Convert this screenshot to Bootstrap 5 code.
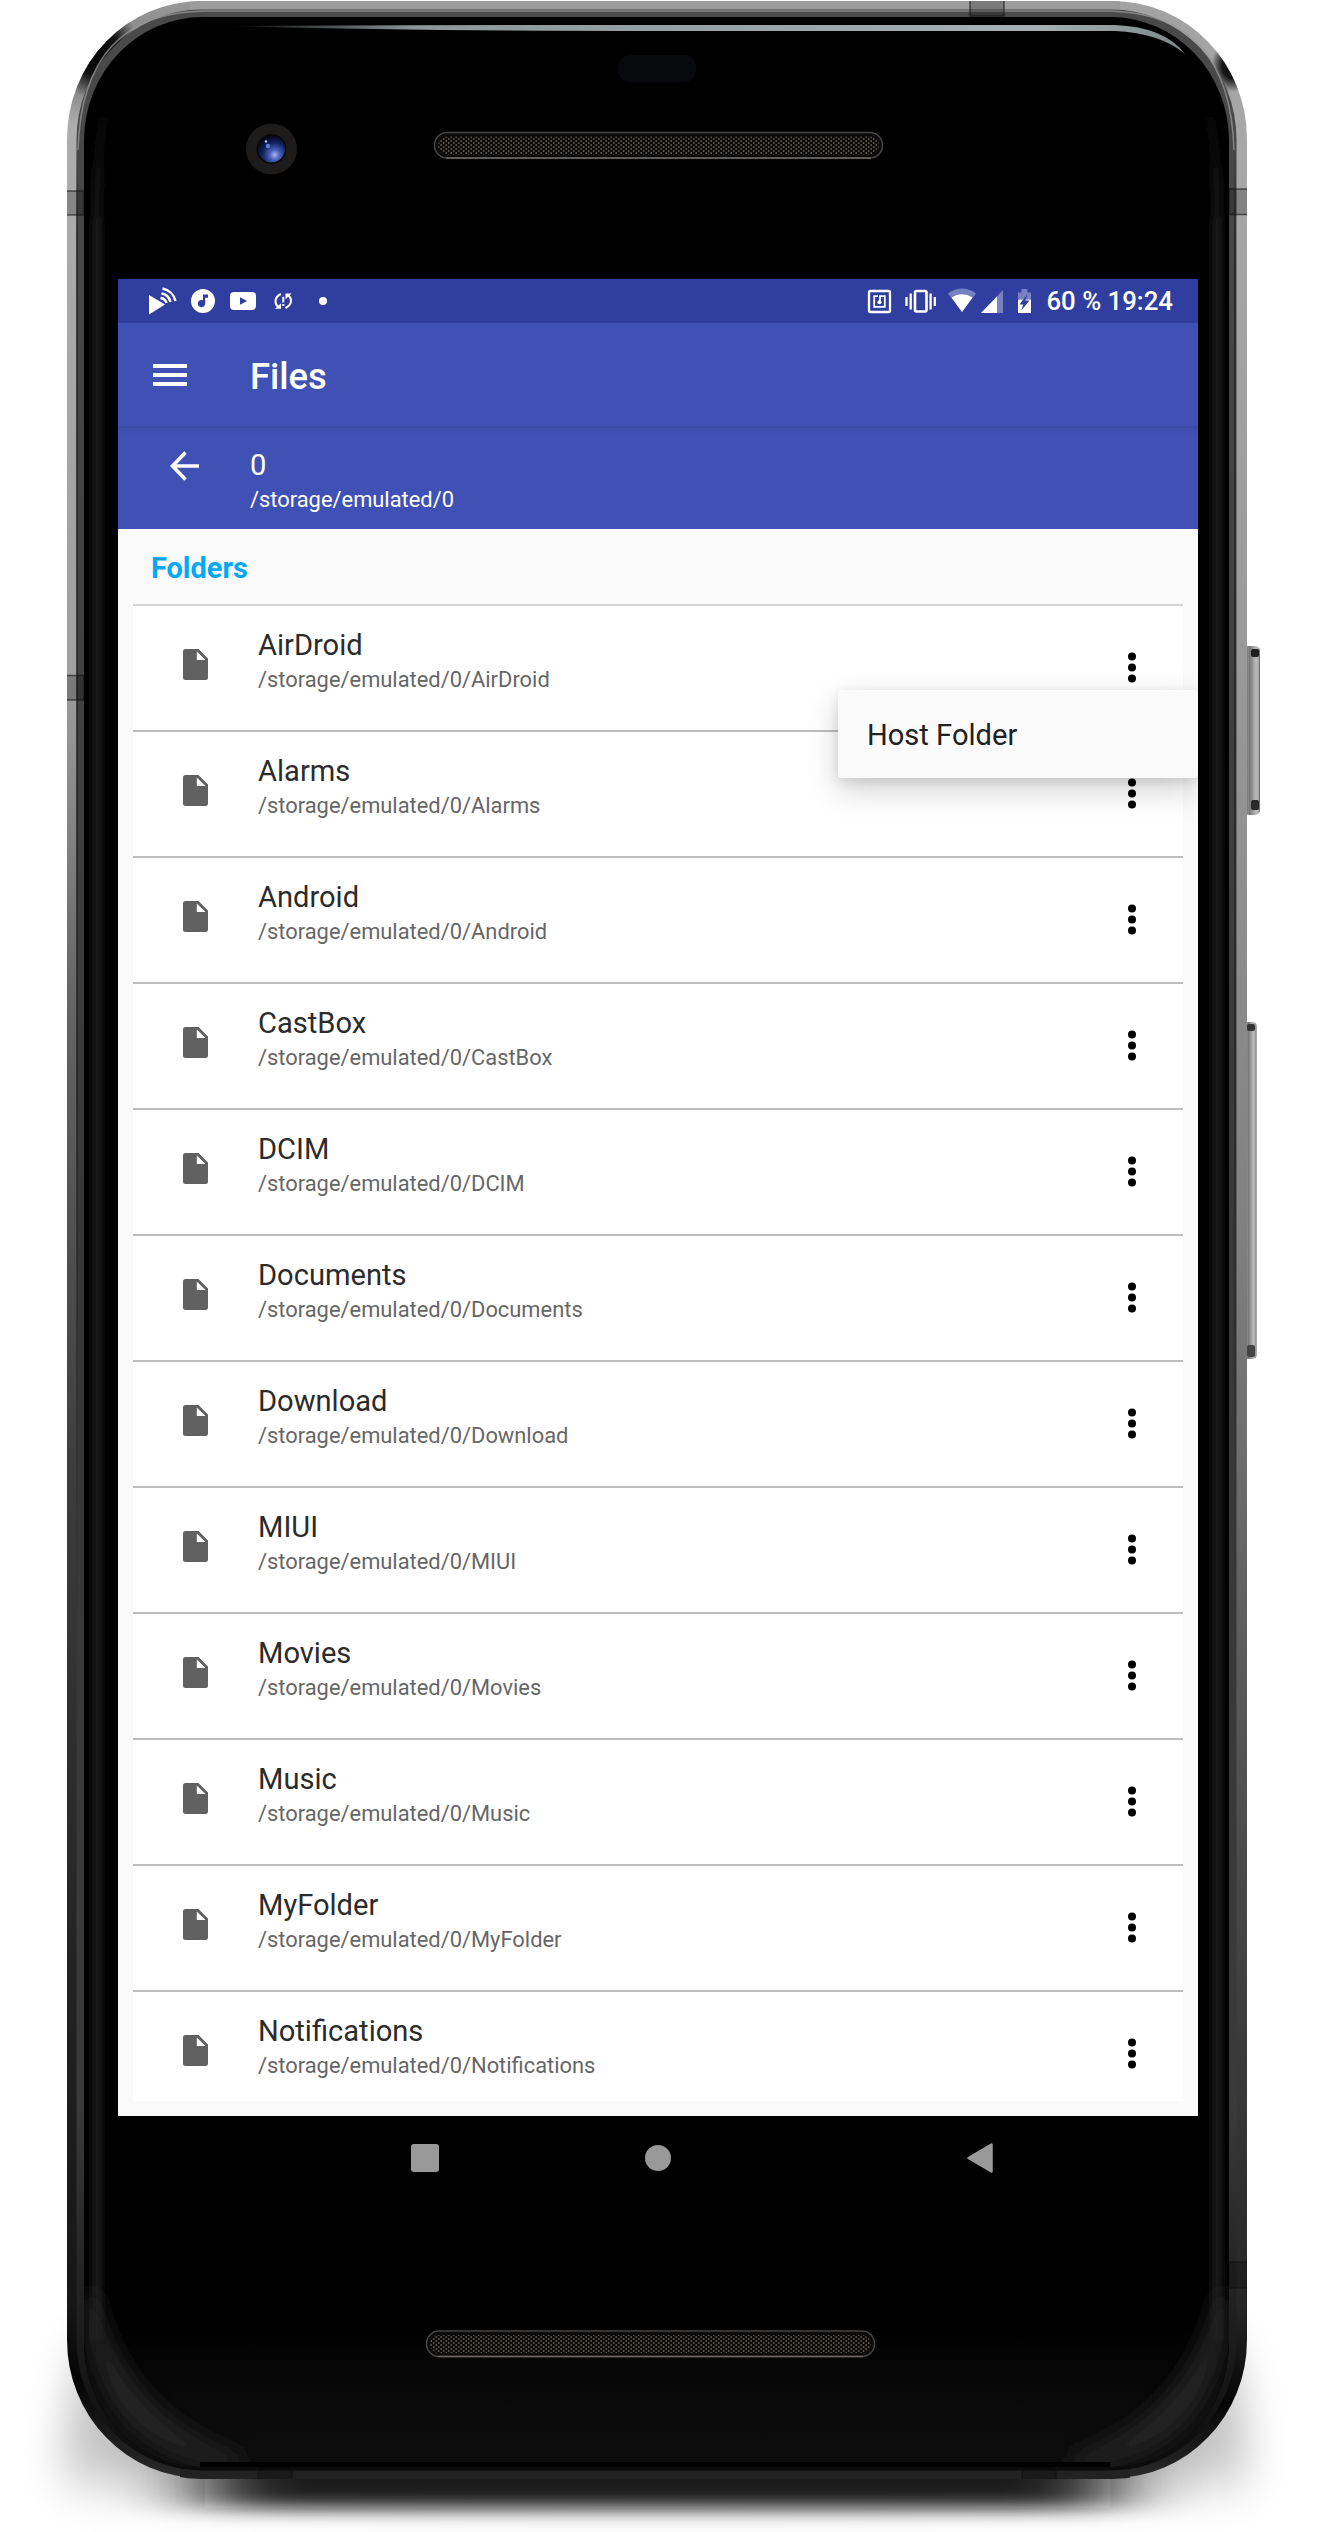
<!DOCTYPE html>
<html lang="en">
<head>
<meta charset="utf-8">
<meta name="viewport" content="width=device-width, initial-scale=1">
<title>Files</title>
<link href="https://cdn.jsdelivr.net/npm/bootstrap@5.3.0/dist/css/bootstrap.min.css" rel="stylesheet">
<style>
  body { background: #fff; font-family: Roboto, "Liberation Sans", sans-serif; }
  .device { width: 1330px; height: 2532px; padding: 279px 132px 0 118px; }
  .device-art { z-index: 0; }
  .phone-screen { width: 1080px; height: 1837px; background: #fafafa; z-index: 1; }
  .status-strip { height: 44px; background: #303f9f; padding: 0 25px 0 29px; font-size: 25.8px; font-weight: 500; line-height: 44px; }
  .status-strip svg { display: block; flex: none; }
  .app-toolbar { height: 103px; background: #3f51b5; padding-left: 35px; }
  .app-title { font-size: 36.4px; font-weight: 500; margin-left: 63px; line-height: 44px; padding-top: 4px; }
  .path-head { height: 103px; background: linear-gradient(#3949a3, #3d4eae 3px, #3f51b5 9px); padding-left: 52px; }
  .path-head svg { margin-top: 25px; }
  .path-text { margin-left: 51px; padding-top: 22px; }
  .name-line { font-size: 29.1px; line-height: 34px; }
  .path-line { font-size: 21.88px; line-height: 26px; margin-top: 5px; }
  .section-title { height: 75px; padding-left: 33px; font-size: 28.9px; font-weight: 700; color: #03a9f4; line-height: 79px; }
  .folder-list { margin: 0 15px; }
  .folder-list .folder-row { height: 126px; border: 0; border-top: 2px solid #bdbdbd; border-radius: 0; background: #fff; padding: 0 47px 0 50px; color: #2b2b2b; }
  .folder-list .folder-row:first-child { border-top-color: #d3d3d3; }
  .folder-list .folder-row:last-child { height: 111px; }
  .folder-row .doc { margin-top: 43px; }
  .folder-row .kebab { margin-top: 46px; }
  .folder-text { margin-left: 50px; padding-top: 22px; }
  .folder-text .path-line { color: #666; }
  .host-menu { left: 720px; top: 411px; width: 360px; height: 88px; border-radius: 4px; background: #fafafa; color: #212121; padding-left: 29px; font-size: 29.1px; line-height: 90px; box-shadow: 0 12px 32px rgba(0,0,0,.18), 0 3px 12px rgba(0,0,0,.1); z-index: 2; }
  .nav-keys { height: 84px; width: 1080px; padding-left: 293px; z-index: 1; }
  .nav-keys .home-key { margin-left: 206px; }
  .nav-keys .back-key { margin-left: 296px; }
</style>
<script src="https://cdn.jsdelivr.net/npm/bootstrap@5.3.0/dist/js/bootstrap.bundle.min.js"></script>
</head>
<body class="m-0">
<div class="device position-relative overflow-hidden">

  <!-- Handset body -->
  <svg class="device-art position-absolute top-0 start-0" width="1330" height="2532" viewBox="0 0 1330 2532" aria-hidden="true">
    <defs>
      <linearGradient id="metal" x1="0" y1="0" x2="0" y2="2478" gradientUnits="userSpaceOnUse">
        <stop offset="0" stop-color="#999"/><stop offset=".03" stop-color="#777"/><stop offset=".05" stop-color="#adadad"/>
        <stop offset=".27" stop-color="#a0a0a0"/><stop offset=".4" stop-color="#666"/><stop offset=".6" stop-color="#3c3c3c"/>
        <stop offset=".8" stop-color="#222"/><stop offset=".93" stop-color="#161616"/><stop offset=".96" stop-color="#050505"/><stop offset="1" stop-color="#2a2a2a"/>
      </linearGradient>
      <linearGradient id="metalR" x1="0" y1="0" x2="0" y2="2478" gradientUnits="userSpaceOnUse">
        <stop offset="0" stop-color="#a2a2a2"/><stop offset=".06" stop-color="#a8a8a8"/><stop offset=".27" stop-color="#999"/><stop offset=".5" stop-color="#808080"/>
        <stop offset=".7" stop-color="#555"/><stop offset=".82" stop-color="#3c3c3c"/><stop offset=".93" stop-color="#262626"/><stop offset=".97" stop-color="#050505"/><stop offset="1" stop-color="#2a2a2a"/>
      </linearGradient>
      <linearGradient id="inner" x1="0" y1="0" x2="0" y2="2478" gradientUnits="userSpaceOnUse">
        <stop offset="0" stop-color="#4a4a4a"/><stop offset=".5" stop-color="#383838"/><stop offset=".85" stop-color="#3a3a3a"/><stop offset="1" stop-color="#0a0a0a"/>
      </linearGradient>
      <linearGradient id="seam" x1="0" y1="140" x2="0" y2="1700" gradientUnits="userSpaceOnUse"><stop offset="0" stop-color="#222" stop-opacity="0"/><stop offset=".06" stop-color="#222"/><stop offset=".6" stop-color="#222"/><stop offset="1" stop-color="#222" stop-opacity="0"/></linearGradient>
      <linearGradient id="sheen" x1="0" y1="90" x2="0" y2="260" gradientUnits="userSpaceOnUse"><stop offset="0" stop-color="#1e1e1e" stop-opacity="0"/><stop offset="1" stop-color="#1e1e1e"/></linearGradient>
      <linearGradient id="glow" x1="0" y1="0" x2="0" y2="1"><stop offset="0" stop-color="#000"/><stop offset=".6" stop-color="#0a0a0a"/><stop offset="1" stop-color="#0d0d0d"/></linearGradient>
      <linearGradient id="shine"><stop offset="0" stop-color="#8b9798" stop-opacity="0"/><stop offset=".2" stop-color="#8b9798"/><stop offset=".85" stop-color="#a5b0b2"/><stop offset="1" stop-color="#7d8889"/></linearGradient>
      <linearGradient id="btn"><stop offset="0" stop-color="#666"/><stop offset=".3" stop-color="#888"/><stop offset=".35" stop-color="#777"/><stop offset=".75" stop-color="#bbb"/><stop offset=".9" stop-color="#aaa"/><stop offset="1" stop-color="#555"/></linearGradient>
      <radialGradient id="lens" cx=".62" cy=".72" r=".75"><stop offset="0" stop-color="#a9b4ee"/><stop offset=".25" stop-color="#4b60bd"/><stop offset=".6" stop-color="#12235f"/><stop offset="1" stop-color="#03040f"/></radialGradient>
      <radialGradient id="dark"><stop offset="0" stop-color="#000"/><stop offset=".5" stop-color="#000" stop-opacity=".85"/><stop offset="1" stop-color="#000" stop-opacity="0"/></radialGradient>
      <pattern id="mesh" width="5" height="4" patternUnits="userSpaceOnUse"><rect width="5" height="4" fill="#0b0a09"/><circle cx="1.2" cy="1" r=".9" fill="#625c53"/><circle cx="3.7" cy="3" r=".9" fill="#625c53"/></pattern>
      <filter id="b45" x="-20%" y="-100%" width="140%" height="300%"><feGaussianBlur stdDeviation="45 9"/></filter>
      <filter id="b22" x="-20%" y="-100%" width="140%" height="300%"><feGaussianBlur stdDeviation="22 26"/></filter>
      <filter id="b10" filterUnits="userSpaceOnUse" x="40" y="2150" width="1240" height="380"><feGaussianBlur stdDeviation="10"/></filter>
      <filter id="b4" filterUnits="userSpaceOnUse" x="60" y="60" width="1200" height="2420"><feGaussianBlur stdDeviation="3.500"/></filter>
      <clipPath id="bodyL"><rect x="0" y="0" width="657" height="2532"/></clipPath>
      <clipPath id="bodyR"><rect x="657" y="0" width="673" height="2532"/></clipPath>
      <clipPath id="shell"><rect x="67" y="1" width="1180" height="2478" rx="134" ry="138"/></clipPath>
      <clipPath id="glass"><rect x="84" y="17" width="1145" height="2450" rx="118" ry="124"/></clipPath>
    </defs>
    <!-- floor shadow -->
    <path d="M80 2350H1235L1250 2478Q1100 2496 657 2496Q200 2496 60 2478Z" fill="#000" opacity=".24" filter="url(#b22)"/>
    <rect x="205" y="2440" width="905" height="68" fill="#111" opacity=".92" filter="url(#b45)"/>
    <!-- side keys -->
    <rect x="1244" y="646" width="16" height="169" rx="5" fill="url(#btn)"/>
    <rect x="1251" y="649" width="8" height="8" rx="2" fill="#1c1c1c"/><rect x="1251" y="800" width="8" height="10" rx="2" fill="#2a2a2a"/>
    <rect x="1244" y="1022" width="12.500" height="337" rx="4" fill="url(#btn)"/>
    <rect x="1247" y="1024" width="8" height="7" rx="2" fill="#333"/><rect x="1247" y="1345" width="8" height="12" rx="2" fill="#444"/>
    <!-- metal band -->
    <rect x="67" y="1" width="1180" height="2477" rx="134" ry="138" fill="url(#metal)" clip-path="url(#bodyL)"/>
    <rect x="67" y="1" width="1180" height="2477" rx="134" ry="138" fill="url(#metalR)" clip-path="url(#bodyR)"/>
    <g clip-path="url(#shell)">
      <rect x="190" y="1" width="930" height="14" fill="#9b9b9b"/>
      <ellipse cx="98" cy="52" rx="42" ry="48" fill="url(#dark)"/>
      <ellipse cx="1233" cy="66" rx="22" ry="26" fill="url(#dark)"/>
      <rect x="180" y="2467" width="950" height="12" fill="#222"/>
    </g>
    <rect x="76.500" y="9.500" width="1160" height="2461" rx="125" ry="130" fill="url(#inner)"/>
    <path d="M78 150Q82 12 205 11H1110Q1230 14 1234 150" fill="none" stroke="#999" stroke-width="1.500" opacity=".75"/>
    <path d="M1234 140H1236V1700H1234ZM76 140H78V1700H76Z" fill="url(#seam)" opacity=".7"/>
    <!-- antenna bands -->
    <g fill="#000" fill-opacity=".22" stroke="#111" stroke-opacity=".6" stroke-width="1.500" clip-path="url(#shell)">
      <path d="M60 191H84V215H60ZM60 675.500H84V700H60ZM1229 189H1255V214.500H1229ZM1229 2262H1255V2288H1229ZM970 -5H1004V16H970ZM258 2464H292V2485H258ZM1022 2464H1056V2485H1022Z"/>
    </g>
    <!-- front glass -->
    <g clip-path="url(#glass)">
      <rect x="84" y="17" width="1145" height="2450" fill="#000"/>
      <rect x="84" y="2320" width="1145" height="147" fill="url(#glow)"/>
      <path d="M110 90Q98 130 97 200V2340M1204 90Q1216 130 1217 200V2340" fill="none" stroke="url(#sheen)" stroke-width="10" filter="url(#b4)"/>
      <path d="M90 2300Q98 2452 235 2462Q120 2420 90 2300ZM1223 2300Q1215 2452 1078 2462Q1193 2420 1223 2300Z" fill="#262626" stroke="#222" stroke-width="16" stroke-linejoin="round" filter="url(#b10)"/>
      <rect x="200" y="2462" width="910" height="6" fill="#000"/>
    </g>
    <path d="M224 26Q400 25 660 25H1115Q1165 27 1185 54Q1160 33 1115 31H660Q400 31 224 26Z" fill="url(#shine)"/>
    <rect x="618" y="55" width="78" height="27" rx="12" fill="#07090d"/>
    <circle cx="271.500" cy="149" r="25.500" fill="#1e1b1b"/>
    <circle cx="271.500" cy="149" r="15" fill="#080808"/>
    <circle cx="271.500" cy="149" r="13.500" fill="url(#lens)"/>
    <circle cx="268" cy="146" r="2.200" fill="#5f7be0"/><circle cx="266" cy="141.500" r="1.200" fill="#b8c6ff"/>
    <g fill="#0b0b0b" stroke-width="1.500">
      <rect x="434.500" y="132.500" width="448" height="25.500" rx="12.500" stroke="#484644"/>
      <rect x="426.500" y="2331" width="448" height="25.500" rx="12.500" stroke="#484644"/>
    </g>
    <path d="M446 158H871M438 2356.500H863" stroke="#6b6662" stroke-width="1.500"/>
    <rect x="438" y="136.500" width="441" height="18" rx="9" fill="url(#mesh)"/>
    <rect x="430" y="2335" width="441" height="18" rx="9" fill="url(#mesh)"/>
  </svg>

  <!-- App screen -->
  <main class="phone-screen position-relative overflow-hidden">
    <div class="status-strip d-flex align-items-center justify-content-between text-white">
      <!-- notification icons -->
      <svg width="184" height="44" viewBox="147 279 184 44" fill="#fff" aria-hidden="true">
        <path d="M149 295L165 304.500L149 314.500Z"/>
        <path d="M162.500 288.500A16.500 16.500 0 0 1 175.500 301M161.500 293.500A11 11 0 0 1 170.500 302M160.500 298A7 7 0 0 1 166.500 303" fill="none" stroke="#fff" stroke-width="2.500"/>
        <circle cx="203" cy="301" r="12"/>
        <path d="M203 294.500H208V297.800H205.200V303.500A3.700 3.700 0 1 1 203 300.200Z" fill="#303f9f"/>
        <path d="M234 292H252Q256 292 256 296V306Q256 310 252 310H234Q230 310 230 306V296Q230 292 234 292Z"/><path d="M240 297.200L247.200 301L240 304.800Z" fill="#303f9f"/>
        <path d="M280.800 294Q275.500 296.500 275.500 301.500Q275.500 305 278.800 307.500M285.500 308Q291 305.500 291 300.500Q291 297 287.600 294.800" fill="none" stroke="#fff" stroke-width="2"/>
        <path d="M275 308.800H281V303.200ZM291.700 293.400H285.500V299.200Z"/><path d="M282.300 296.800H284.300V302.400H282.300ZM282.300 304H284.300V306H282.300Z"/>
        <circle cx="323" cy="301" r="4"/>
      </svg>
      <div class="d-flex align-items-center">
        <!-- system icons -->
        <svg width="180" height="44" viewBox="866 279 180 44" fill="#fff" aria-hidden="true">
          <rect x="869" y="291" width="21" height="21" rx="1.500" fill="none" stroke="#fff" stroke-width="2.300"/>
          <path d="M878 296.200H874.200V306.800H884.800V296.200H880V302" fill="none" stroke="#fff" stroke-width="1.800"/><circle cx="879.500" cy="302.200" r="2"/>
          <rect x="915" y="291" width="11.500" height="20.500" rx="1.500" fill="none" stroke="#fff" stroke-width="2.600"/>
          <path d="M910.700 293.500V309.500M906.500 297V306M930.600 293.500V309.500M934.800 297V306" stroke="#fff" stroke-width="2.300"/>
          <path d="M948 293.500Q962 283.500 976 293.500L962 312Z" fill-opacity=".35"/><path d="M951.500 297.500Q962 290.800 972.500 297.500L962 312Z"/>
          <path d="M981 313L1003 290V313Z" fill-opacity=".35"/><path d="M981 313L997 296.500V313Z"/>
          <path d="M1018 299.500V292.500H1021.500V289H1027.500V292.500H1031V299.500Z" fill-opacity=".35"/><path d="M1018 299.500H1031V313H1018Z"/><path d="M1027.500 294L1019.500 304.500H1023.300L1021.300 310.500L1029.500 300.500H1025.300Z" fill="#303f9f"/>
        </svg>
        <span>60&nbsp;% 19:24</span>
      </div>
    </div>

    <header class="app-toolbar d-flex align-items-center text-white">
      <svg width="34" height="22" viewBox="0 0 34 22" fill="#fff" aria-label="Menu"><path d="M0 0H34V4H0ZM0 9H34V13H0ZM0 18H34V22H0Z"/></svg>
      <span class="app-title">Files</span>
    </header>

    <div class="path-head d-flex align-items-start text-white">
      <svg width="29" height="30" viewBox="0 0 29 30" fill="none" stroke="#fff" stroke-width="3.600" aria-label="Back"><path d="M15.500 1.500L2.500 15L15.500 28.500M2.500 15H29"/></svg>
      <div class="path-text"><div class="name-line">0</div><div class="path-line">/storage/emulated/0</div></div>
    </div>

    <div class="section-title">Folders</div>
    <div class="folder-list list-group" id="folders"></div>

    <div class="host-menu position-absolute">Host Folder</div>
  </main>

  <!-- Navigation keys -->
  <div class="nav-keys position-relative d-flex align-items-center">
    <svg width="28" height="28" viewBox="0 0 28 28"><rect width="28" height="28" rx="3" fill="#999"/></svg>
    <svg class="home-key" width="26" height="26" viewBox="0 0 26 26"><circle cx="13" cy="13" r="13" fill="#999"/></svg>
    <svg class="back-key" width="26" height="30" viewBox="0 0 26 30"><path d="M24.500 1.500V28.500L1.500 15Z" fill="#999" stroke="#999" stroke-width="2.500" stroke-linejoin="round"/></svg>
  </div>
</div>

<script>
  const names = ["AirDroid", "Alarms", "Android", "CastBox", "DCIM", "Documents", "Download", "MIUI", "Movies", "Music", "MyFolder", "Notifications"];
  document.getElementById("folders").innerHTML = names.map(n => `
    <div class="folder-row list-group-item d-flex align-items-start">
      <svg class="doc" width="25" height="31" viewBox="0 0 25 31"><path fill-rule="evenodd" fill="#616161" d="M2.500 0H15.500L25 9.500V28.500Q25 31 22.500 31H2.500Q0 31 0 28.500V2.500Q0 0 2.500 0ZM13.800 2.500V11H22.500Z"/></svg>
      <div class="folder-text flex-grow-1"><div class="name-line">${n}</div><div class="path-line">/storage/emulated/0/${n}</div></div>
      <svg class="kebab" width="8" height="31" viewBox="0 0 8 31"><circle cx="4" cy="4.500" r="4"/><circle cx="4" cy="15.600" r="4"/><circle cx="4" cy="26.600" r="4"/></svg>
    </div>`).join("");
</script>
</body>
</html>
